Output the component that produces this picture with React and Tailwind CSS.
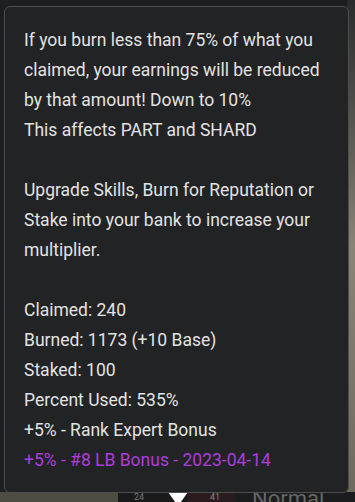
import React from "react";

export default function App() {
  const lines = [
    "If you burn less than 75% of what you",
    "claimed, your earnings will be reduced",
    "by that amount! Down to 10%",
    "This affects PART and SHARD",
    "",
    "Upgrade Skills, Burn for Reputation or",
    "Stake into your bank to increase your",
    "multiplier.",
    "",
    "Claimed: 240",
    "Burned: 1173 (+10 Base)",
    "Staked: 100",
    "Percent Used: 535%",
    "+5% - Rank Expert Bonus",
  ];
  return (
    <div className="relative w-[355px] h-[502px] overflow-hidden bg-[#1c1e20]" style={{ fontFamily: "Roboto, 'Liberation Sans', sans-serif" }}>
      {/* background page */}
      <div className="flex flex-col h-full">
        <div className="flex flex-1">
          <div className="flex-1 bg-[#1c1e20]" />
          <div className="w-[8px] bg-gradient-to-b from-[#2a2b2c] via-[#8a8477] to-[#6f6a5e]" />
        </div>
        <div className="flex h-[10px]">
          <div className="w-[118px] bg-[#4e4d44]" />
          <div className="w-[50px] bg-[#1a1a1b] text-[9px] leading-[10px] text-[#777] pl-[16px] overflow-hidden">24</div>
          <div className="w-[20px] bg-[#1a1a1b] flex justify-center">
            <div className="w-0 h-0 border-l-[10px] border-r-[10px] border-t-[14px] border-l-transparent border-r-transparent border-t-white" />
          </div>
          <div className="w-[47px] bg-[#2a1c1e] text-[9px] leading-[10px] text-[#888] pl-[22px] overflow-hidden">41</div>
          <div className="flex-1 bg-[#1b1c1d] text-[22px] leading-[14px] text-[#666] pl-[17px] overflow-hidden">Normal</div>
        </div>
      </div>

      {/* tooltip */}
      <div className="absolute left-[4px] top-[6px] w-[345px] h-[487px] rounded-[6px] border border-[#4d4e50] bg-[#222325] pl-[19px] pt-[18px] text-[17.5px] leading-[30px] text-[#e2e2e2]">
        {lines.map((l, i) => (
          <div key={i} className="h-[30px] whitespace-nowrap">{l}</div>
        ))}
        <div className="h-[30px] whitespace-nowrap text-[#ad3ddc]">+5% - #8 LB Bonus - 2023-04-14</div>
      </div>
    </div>
  );
}
